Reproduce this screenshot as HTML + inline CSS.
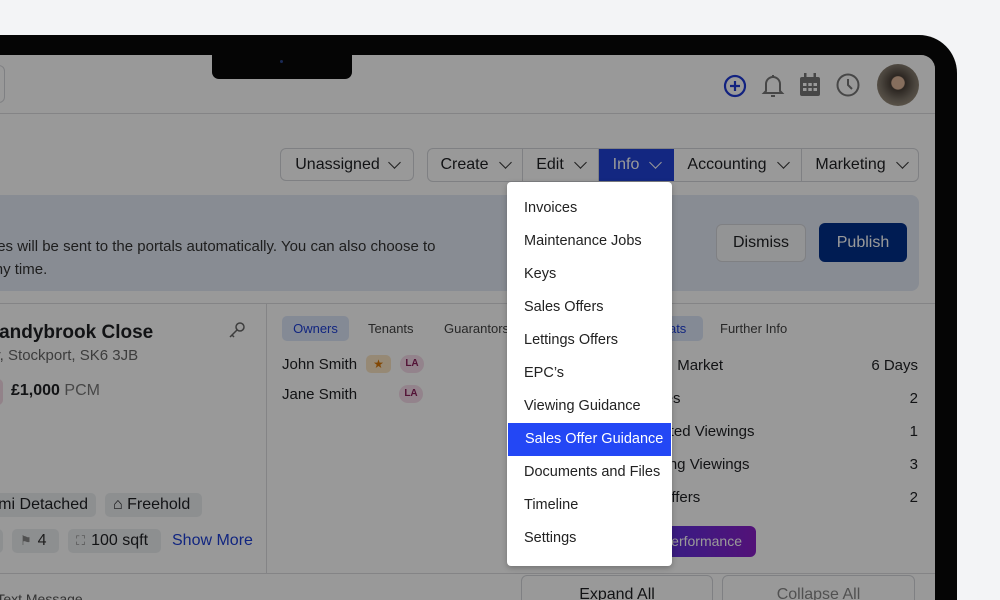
<!DOCTYPE html>
<html style="overflow:hidden;width:1000px;height:600px"><head><meta charset="utf-8"><style>
*{box-sizing:border-box;margin:0;padding:0}
body{width:1000px;height:600px;overflow:hidden;background:#f3f4f6;font-family:"Liberation Sans",sans-serif;position:relative;color:#1f2023}
.bezel{position:absolute;left:-60px;top:35px;width:1017px;height:565px;background:#050505;border-radius:0 38px 0 0}
.screen{position:absolute;left:-40px;top:55px;width:975px;height:545px;background:#fff;border-radius:0 14px 0 0;overflow:hidden}
.abs{position:absolute}
.btn{position:absolute;border:1px solid #d4d6da;border-radius:6px;background:#fff;font-size:16px;display:flex;align-items:center;justify-content:center;gap:10px}
.chev{width:9px;height:9px;border-right:1.8px solid #333;border-bottom:1.8px solid #333;transform:rotate(45deg);margin-top:-5px}
.tag{position:absolute;background:#eceef1;border-radius:5px;font-size:16px;display:flex;align-items:center;padding:0 8px;gap:6px}
.overlay{position:absolute;inset:0;background:rgba(0,0,0,0.4)}
.menu{position:absolute;left:507px;top:182px;width:165px;height:384px;background:#fff;border-radius:4px;box-shadow:0 2px 6px rgba(0,0,0,.25);padding-top:10px}
.menu div{height:33px;line-height:33px;padding-left:17px;font-size:14.5px;color:#222}
.menu .hi{background:#2347f5;color:#fff;margin:0 1px}
.row{position:absolute;width:300px;font-size:15px;display:flex;justify-content:space-between}
</style></head><body>
<div class="bezel"></div>
<div class="screen">
 <div class="abs" style="left:0;top:10px;width:45px;height:38px;border:1px solid #d4d6da;border-radius:6px"></div>
 <div class="abs" style="left:0;top:58px;width:975px;height:1px;background:#dcdde0"></div>
 <svg class="abs" style="left:763px;top:19px" width="24" height="24" viewBox="0 0 24 24" fill="none" stroke="#1e3ad6" stroke-width="2.2"><circle cx="12" cy="12" r="10"/><path d="M12 7v10M7 12h10"/></svg>
 <svg class="abs" style="left:801px;top:17px" width="24" height="28" viewBox="0 0 24 28" fill="none" stroke="#777" stroke-width="2"><path d="M5 19V12a7 7 0 0 1 14 0v7l2 2H3z"/><path d="M10 24h4"/><path d="M12 3v2"/></svg>
 <svg class="abs" style="left:839px;top:18px" width="22" height="24" viewBox="0 0 22 24" fill="#777"><rect x="1" y="4" width="20" height="19" rx="2"/><rect x="5" y="0" width="2.5" height="6"/><rect x="14.5" y="0" width="2.5" height="6"/><g fill="#fff"><rect x="4" y="10" width="3.5" height="3"/><rect x="9.3" y="10" width="3.5" height="3"/><rect x="14.5" y="10" width="3.5" height="3"/><rect x="4" y="15" width="3.5" height="3"/><rect x="9.3" y="15" width="3.5" height="3"/><rect x="14.5" y="15" width="3.5" height="3"/></g></svg>
 <svg class="abs" style="left:876px;top:18px" width="24" height="24" viewBox="0 0 24 24" fill="none" stroke="#777" stroke-width="2"><circle cx="12" cy="12" r="10.5"/><path d="M12 6v6l4 4"/></svg>
 <div class="abs" style="left:917px;top:9px;width:42px;height:42px;border-radius:50%;background:radial-gradient(circle at 50% 45%,#e0b89c 0 20%,#4a4038 23%,#7d7468 55%,#b5a690)"></div>
 <div class="btn" style="left:320px;top:93px;width:134px;height:33px">Unassigned <span class="chev"></span></div>
 <div class="abs" style="left:467px;top:93px;width:492px;height:34px;border:1px solid #d4d6da;border-radius:6px;overflow:hidden;font-size:16px">
  <div class="abs" style="left:0;width:95px;height:100%;display:flex;align-items:center;justify-content:center;gap:12px;border-right:1px solid #d4d6da">Create <span class="chev"></span></div>
  <div class="abs" style="left:95px;width:76px;height:100%;display:flex;align-items:center;justify-content:center;gap:12px;border-right:1px solid #d4d6da">Edit <span class="chev"></span></div>
  <div class="abs" style="left:171px;width:75px;height:100%;display:flex;align-items:center;justify-content:center;gap:12px;background:#2142d8;color:#fff">Info <span class="chev" style="border-color:#fff"></span></div>
  <div class="abs" style="left:246px;width:128px;height:100%;display:flex;align-items:center;justify-content:center;gap:12px;border-right:1px solid #d4d6da">Accounting <span class="chev"></span></div>
  <div class="abs" style="left:374px;width:118px;height:100%;display:flex;align-items:center;justify-content:center;gap:12px">Marketing <span class="chev"></span></div>
 </div>
 <div class="abs" style="left:0;top:140px;width:959px;height:96px;background:#e3e9f5;border-radius:8px"></div>
 <div class="abs" style="left:-42px;top:180px;font-size:15px;line-height:23px;color:#333">Price changes will be sent to the portals automatically. You can also choose to<br>publish at any time.</div>
 <div class="btn" style="left:756px;top:169px;width:90px;height:38px;background:#f6f7f8">Dismiss</div>
 <div class="btn" style="left:859px;top:168px;width:88px;height:39px;background:#00308a;color:#fff;border:none">Publish</div>
 <div class="abs" style="left:0;top:248px;width:975px;height:1px;background:#dcdde0"></div>
 <div class="abs" style="left:306px;top:248px;width:1px;height:270px;background:#dcdde0"></div>
 <div class="abs" style="left:0;top:518px;width:975px;height:1px;background:#dcdde0"></div>
 <div class="abs" style="left:0;top:267px;font-size:19px;font-weight:bold">13 Sandybrook Close</div>
 <div class="abs" style="left:-52px;top:292px;font-size:15px;color:#666">Bramhall Way, Stockport, SK6 3JB</div>
 <svg class="abs" style="left:268px;top:266px" width="18" height="18" viewBox="0 0 18 18" fill="none" stroke="#666" stroke-width="1.5"><circle cx="12" cy="6" r="4"/><path d="M9 9 2 16M4 14l2 2"/></svg>
 <div class="abs" style="left:0;top:324px;width:43px;height:26px;background:#f3d9e4;border-radius:5px"></div>
 <div class="abs" style="left:51px;top:327px;font-size:16px"><b>£1,000</b> <span style="color:#777">PCM</span></div>
 <div class="tag" style="left:0;top:438px;width:136px;height:24px;justify-content:flex-end">Semi Detached</div>
 <div class="tag" style="left:145px;top:438px;height:24px;width:97px">⌂ Freehold</div>
 <div class="tag" style="left:0;top:474px;width:43px;height:24px"></div>
 <div class="tag" style="left:52px;top:474px;height:24px;width:47px;color:#333"><span style="color:#888;font-size:13px">⚑</span> 4</div>
 <div class="tag" style="left:108px;top:474px;height:24px;width:93px"><span style="color:#888;font-size:13px">⛶</span> 100 sqft</div>
 <div class="abs" style="left:212px;top:477px;font-size:16px;color:#1d3fd6">Show More</div>
 <div class="abs" style="left:0;top:536px;font-size:14px;color:#555">Send Text Message</div>
 <div class="abs" style="left:322px;top:261px;width:67px;height:25px;background:#dce6f8;border-radius:5px;color:#1d3fd6;font-size:13px;display:flex;align-items:center;justify-content:center">Owners</div>
 <div class="abs" style="left:408px;top:266px;font-size:13px;color:#444">Tenants</div>
 <div class="abs" style="left:484px;top:266px;font-size:13px;color:#444">Guarantors</div>
 <div class="abs" style="left:322px;top:301px;font-size:15px">John Smith</div>
 <div class="abs" style="left:406px;top:300px;width:25px;height:18px;background:#fbe5c4;border-radius:5px;color:#d97706;font-size:12px;text-align:center;line-height:18px">★</div>
 <div class="abs" style="left:440px;top:300px;width:24px;height:18px;background:#f5dbe9;border-radius:9px;color:#8a1f5a;font-size:10px;font-weight:bold;text-align:center;line-height:18px">LA</div>
 <div class="abs" style="left:322px;top:331px;font-size:15px">Jane Smith</div>
 <div class="abs" style="left:439px;top:330px;width:24px;height:18px;background:#f5dbe9;border-radius:9px;color:#8a1f5a;font-size:10px;font-weight:bold;text-align:center;line-height:18px">LA</div>
 <div class="abs" style="left:680px;top:261px;width:63px;height:25px;background:#dce6f8;border-radius:5px;color:#1d3fd6;font-size:13px;display:flex;align-items:center;justify-content:center">Stats</div>
 <div class="abs" style="left:760px;top:266px;font-size:13px;color:#444">Further Info</div>
 <div class="row" style="left:658px;top:302px"><span>Days on Market</span><span>6 Days</span></div>
 <div class="row" style="left:658px;top:335px"><span>Enquiries</span><span>2</span></div>
 <div class="row" style="left:658px;top:368px"><span>Completed Viewings</span><span>1</span></div>
 <div class="row" style="left:658px;top:401px"><span>Upcoming Viewings</span><span>3</span></div>
 <div class="row" style="left:658px;top:434px"><span>Sales Offers</span><span>2</span></div>
 <div class="abs" style="left:580px;top:471px;width:216px;height:31px;border-radius:6px;background:linear-gradient(90deg,#2050d8,#6a2bd8 70%,#8a1fc8);color:#fff;font-size:14px;text-align:right;padding-right:14px;line-height:31px">View Performance</div>
 <div class="btn" style="left:561px;top:520px;width:192px;height:40px">Expand All</div>
 <div class="btn" style="left:762px;top:520px;width:193px;height:40px;color:#888">Collapse All</div>
 <div class="overlay"></div>
</div>
<div class="abs" style="left:212px;top:54px;width:140px;height:25px;background:#050505;border-radius:0 0 7px 7px"></div>
<div class="abs" style="left:280px;top:60px;width:3px;height:3px;border-radius:50%;background:#1a2a55"></div>
<div class="menu">
 <div>Invoices</div><div>Maintenance Jobs</div><div>Keys</div><div>Sales Offers</div><div>Lettings Offers</div><div>EPC’s</div><div>Viewing Guidance</div><div class="hi">Sales Offer Guidance</div><div>Documents and Files</div><div>Timeline</div><div>Settings</div>
</div>
</body></html>
